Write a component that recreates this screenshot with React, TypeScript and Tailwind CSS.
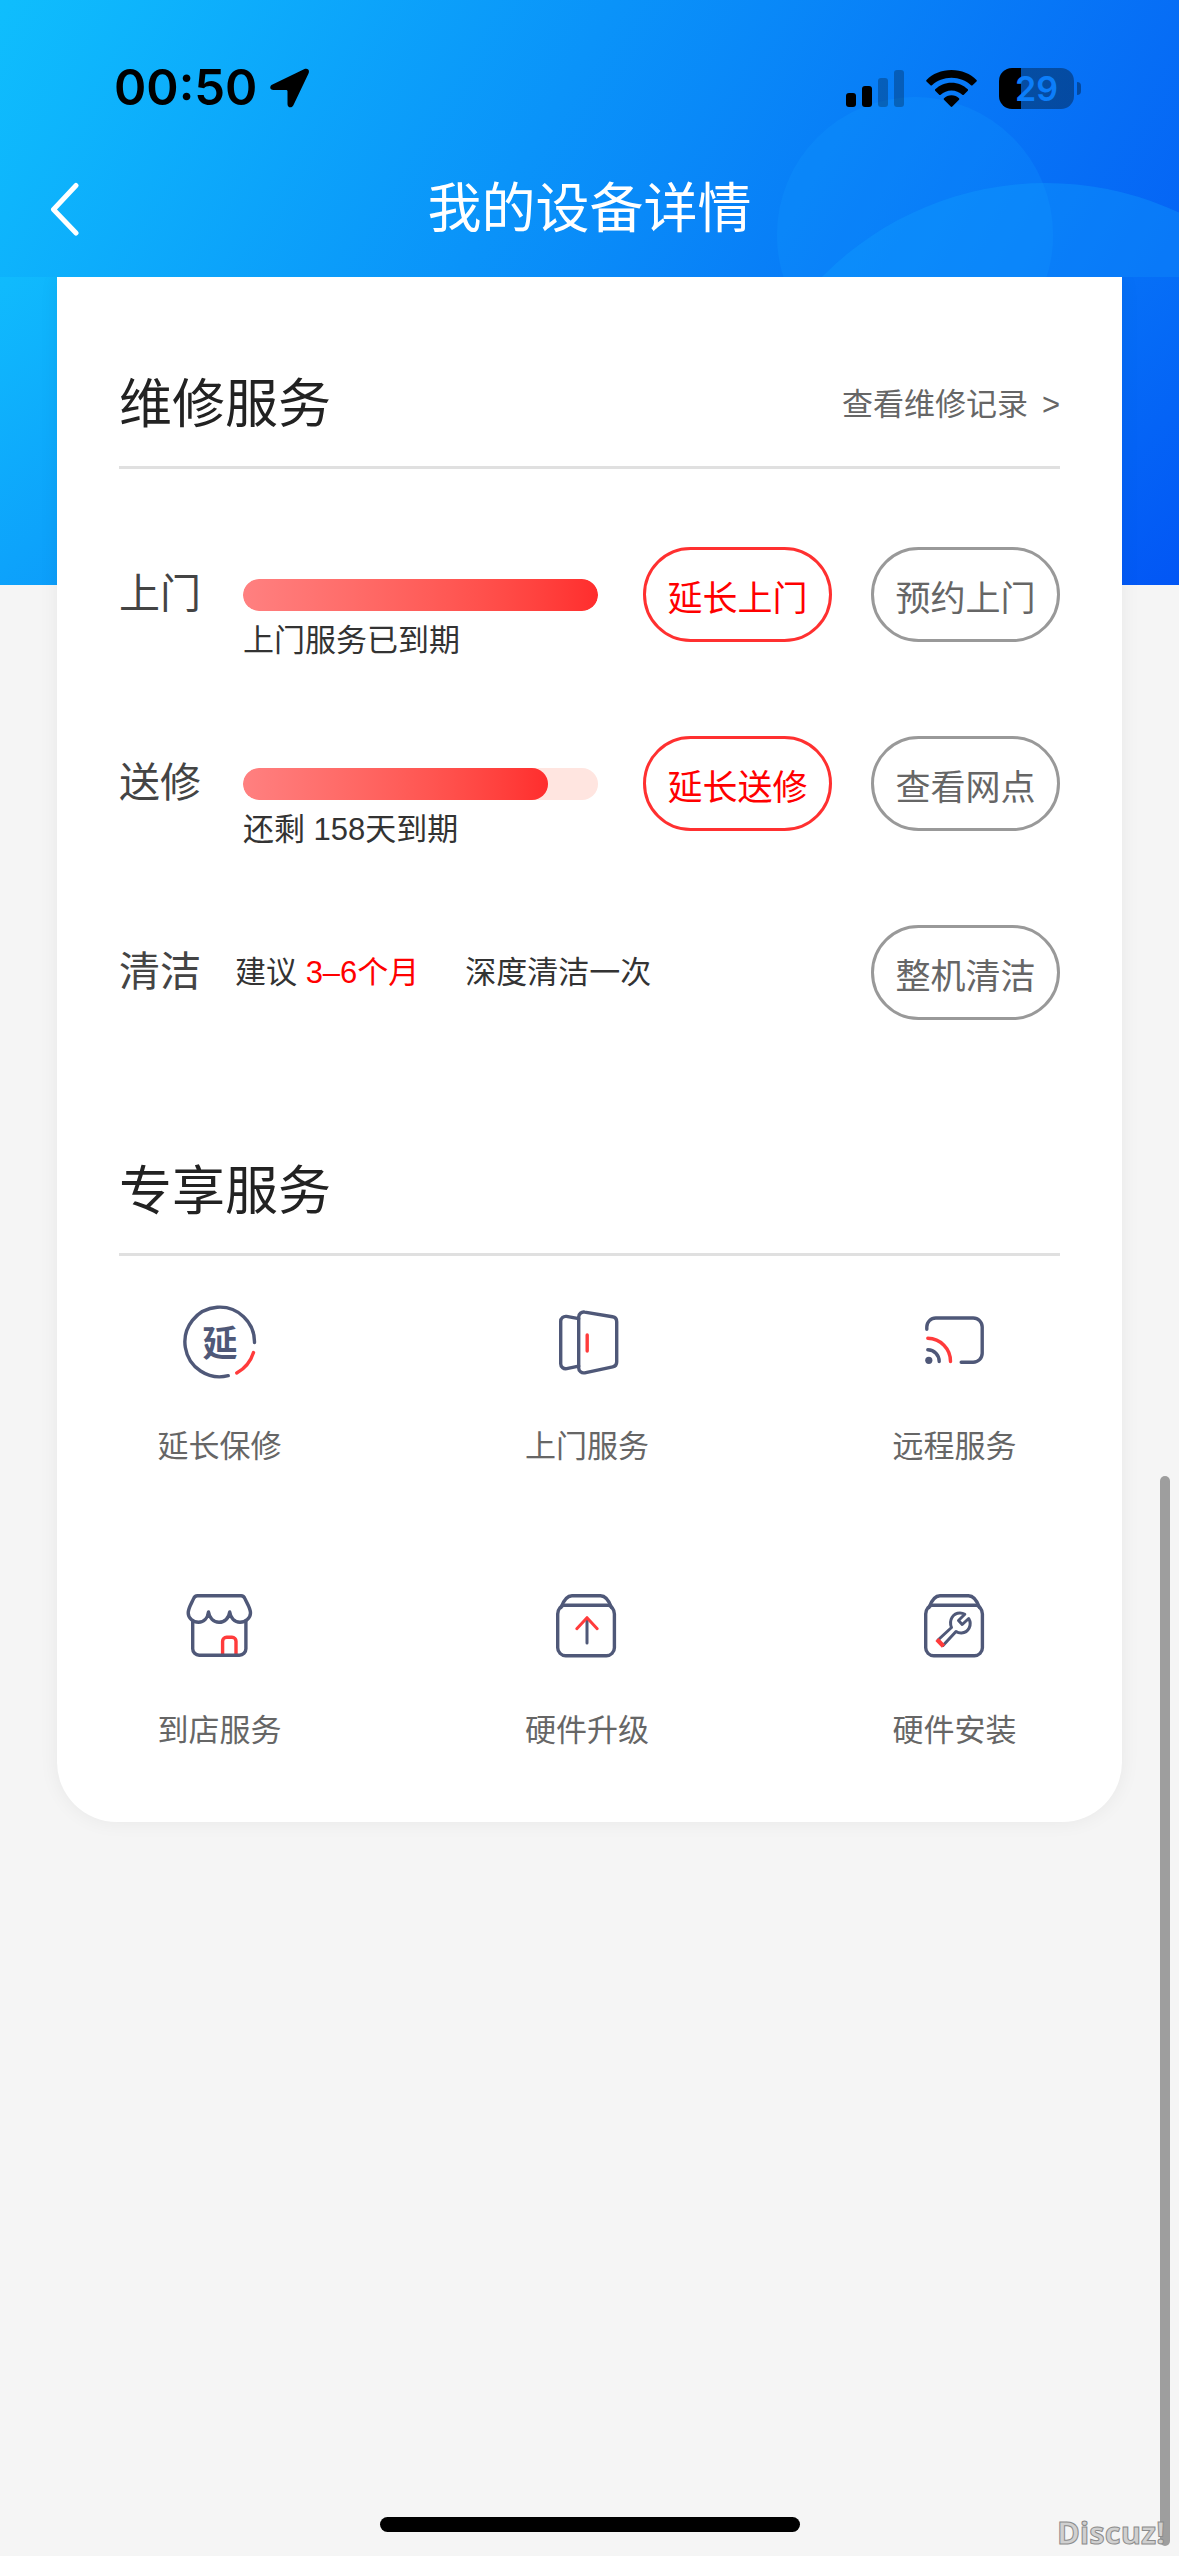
import React from 'react';

interface RepairItem {
  label: string;
  percent: number;
  caption: string;
  extend: string;
  action: string;
}

interface ExclusiveService {
  label: string;
  icon: React.ReactNode;
}

const INK = '#4f5878';
const RED = '#ff3b3b';

const repairItems: RepairItem[] = [
  { label: '上门', percent: 100, caption: '上门服务已到期', extend: '延长上门', action: '预约上门' },
  { label: '送修', percent: 86, caption: '还剩 158天到期', extend: '延长送修', action: '查看网点' }
];

const ServiceIcon: React.FC<{ children: React.ReactNode }> = ({ children }) => (
  <svg
    viewBox="1 0 94 94"
    className="w-[94px] h-[94px]"
    fill="none"
    stroke={INK}
    strokeWidth="3.4"
    strokeLinecap="round"
    strokeLinejoin="round"
    aria-hidden="true"
  >
    {children}
  </svg>
);

const BoxOutline = () => (
  <>
    <path d="M22 28.5C24 23 27.5 16.7 33 16.7H61.500C67 16.700 70.500 23 72.500 28.500" />
    <path d="M25 26.200H69.400C71.500 26.200 75.400 30 75.400 35V68.700A8 8 0 0 1 67.400 76.700H26.700A8 8 0 0 1 18.700 68.700V35C18.700 30 22.500 26.200 25 26.200Z" />
  </>
);

const services: ExclusiveService[] = [
  {
    label: '延长保修',
    icon: (
      <ServiceIcon>
        <path d="M82.500 47.500A34.800 34.800 0 1 0 56.200 80.700" />
        <path d="M81.500 57.500A35.500 35.500 0 0 1 64.700 78" stroke={RED} />
        <text
          x="48"
          y="61"
          textAnchor="middle"
          fill={INK}
          stroke="none"
          className="font-['Noto_Sans_CJK_SC',sans-serif] text-[35px] font-bold"
        >
          延
        </text>
      </ServiceIcon>
    )
  },
  {
    label: '上门服务',
    icon: (
      <ServiceIcon>
        <path d="M39.700 22A5 5 0 0 1 45.700 17.100L73.500 21.800A5 5 0 0 1 77.700 26.700V67A5 5 0 0 1 73.700 71.900L45.700 77.800A5 5 0 0 1 39.700 72.900Z" />
        <path d="M39.700 23.600L27.500 21.400A5 5 0 0 0 21.700 26.300V68.800A5 5 0 0 0 27.700 73.700L39.700 71.200" />
        <path d="M48.200 40V56" stroke={RED} />
      </ServiceIcon>
    )
  },
  {
    label: '远程服务',
    icon: (
      <ServiceIcon>
        <path d="M19.800 34.300V32A9 9 0 0 1 28.800 23H66.200A9 9 0 0 1 75.200 32V58.300A9 9 0 0 1 66.200 67.300H54.200" />
        <path d="M20.800 43.300A23 23 0 0 1 43.500 66.500" stroke={RED} />
        <path d="M20.800 54.700A11.700 11.700 0 0 1 32.200 66.500" />
        <circle cx="21.800" cy="65.300" r="3.600" fill={INK} stroke="none" />
      </ServiceIcon>
    )
  },
  {
    label: '到店服务',
    icon: (
      <ServiceIcon>
        <path d="M50.600 75V62.300A4 4 0 0 1 54.600 58.300H60A4 4 0 0 1 64 62.300V75" stroke={RED} />
        <path d="M20.700 42V69.700A6.500 6.500 0 0 0 27.200 76.200H67.400A6.500 6.500 0 0 0 73.900 69.700V42" />
        <path d="M25.500 16.700H69A4 4 0 0 1 72.800 19.400C75 24.500 78.500 29 78.500 34C78.500 39 73.500 43.300 68 43.300C62.500 43.300 58.500 39 57.700 33C57 39 52.500 43.300 47 43.300C41.500 43.300 37.300 39 36.500 33C35.700 39 32 43.300 26.500 43.300C21 43.300 16.200 39 16.200 34C16.200 29 19.500 24.500 21.700 19.400A4 4 0 0 1 25.500 16.700Z" />
      </ServiceIcon>
    )
  },
  {
    label: '硬件升级',
    icon: (
      <ServiceIcon>
        <BoxOutline />
        <path d="M48 41V64" strokeWidth="3" />
        <path d="M37.800 49.700L48 38.700L58.200 49.700" stroke={RED} strokeWidth="3" />
      </ServiceIcon>
    )
  },
  {
    label: '硬件安装',
    icon: (
      <ServiceIcon>
        <BoxOutline />
        <path
          d="M31 61L44.500 48.500C41.500 41 46 34 53 34C55 34 56.500 34.500 57.800 35.300L51.500 41.500L55.200 45.500L61.700 39.500C65.500 46 61.500 53.500 54.500 54C52.500 54.100 50.500 53.500 49 52.500L36 66.500"
          strokeWidth="3"
        />
        <path d="M30 60.500L36.500 67.300" stroke={RED} strokeWidth="4.400" strokeLinecap="butt" />
      </ServiceIcon>
    )
  }
];

const StatusBar = () => (
  <div className="flex h-[176px] items-center justify-between pl-[114px] pr-[98px]">
    <div className="flex items-center gap-[13px]">
      <span className="font-['Inter',sans-serif] text-[49px] leading-[60px] font-semibold text-black">00:50</span>
      <svg viewBox="0 0 39 40" className="w-[39px] h-10" aria-hidden="true">
        <path d="M2.500 16.500L34 1.300C37.500-.3 40 2 38.500 5.500L23.500 37C22 40.500 17.500 40 17.500 36V23.500C17.500 22.500 17 22 16 22H3.500C-.5 22-.8 18 2.500 16.500Z" />
      </svg>
    </div>

    <div className="flex items-center gap-[22px]">
      <svg viewBox="0 0 58 38" className="w-[58px] h-[38px]" aria-hidden="true">
        <rect x="0" y="24" width="10" height="14" rx="3" />
        <rect x="16" y="17" width="10" height="21" rx="3" />
        <rect x="32" y="9" width="10" height="29" rx="3" opacity=".25" />
        <rect x="48" y="1" width="10" height="37" rx="3" opacity=".25" />
      </svg>
      <svg viewBox="0 0 51 38" className="w-[51px] h-[38px]" aria-hidden="true">
        <path d="M25.500 1C35.500 1 44.500 4.800 50.500 11C51 11.500 51 12 50.500 12.500L46.500 16.300C46 16.700 45.500 16.700 45 16.200C40 11.500 33 8.700 25.500 8.700S11 11.500 6 16.200C5.500 16.700 5 16.700 4.500 16.300L.5 12.500C0 12 0 11.500 .5 11C6.500 4.800 15.500 1 25.500 1Z" />
        <path d="M25.500 13.700C32 13.700 37.500 16.200 41.800 20.300C42.300 20.800 42.300 21.300 41.800 21.800L37.800 25.700C37.300 26.200 36.800 26.100 36.300 25.700C33.400 23 29.700 21.400 25.500 21.400S17.600 23 14.700 25.700C14.200 26.100 13.700 26.200 13.200 25.700L9.200 21.800C8.700 21.300 8.700 20.800 9.200 20.300C13.500 16.200 19 13.700 25.500 13.700Z" />
        <path d="M25.500 26.300C28.500 26.300 31 27.400 33 29.200C33.500 29.700 33.500 30.200 33 30.700L26.300 37.500C25.800 38 25.200 38 24.700 37.500L18 30.700C17.500 30.200 17.500 29.700 18 29.200C20 27.400 22.500 26.300 25.500 26.300Z" />
      </svg>
      <div className="flex items-center gap-[3px]">
        <div className="flex h-[41px] w-[75px] items-center justify-center rounded-[13px] bg-[linear-gradient(90deg,#000_22px,rgba(0,0,0,0.34)_22px)] font-['Inter',sans-serif] text-[34px] leading-[41px] font-semibold text-[#0c7efa]">
          29
        </div>
        <div className="h-[13px] w-1 rounded-r-full bg-black/35" />
      </div>
    </div>
  </div>
);

const Header = () => (
  <header className="relative h-[277px] overflow-hidden bg-[linear-gradient(120deg,#0fbefd_0%,#0a93f9_46%,#0563f5_100%)]">
    {/* Decorative bubbles */}
    <div className="absolute top-[97px] right-[126px] size-[276px] rounded-full bg-[#12a0ff]/20" />
    <div className="absolute top-[183px] -right-[181px] size-[628px] rounded-full bg-[#12a0ff]/35" />

    <div className="relative">
      <StatusBar />
      <div className="grid grid-cols-[1fr_auto_1fr] items-center px-12">
        <button type="button" aria-label="返回" className="justify-self-start">
          <svg viewBox="0 0 33 54" className="w-[33px] h-[54px]" fill="none" stroke="#fff" strokeWidth="5" strokeLinecap="round" strokeLinejoin="round">
            <path d="M28 3.500L5.500 27.500L28 51" />
          </svg>
        </button>
        <h1 className="text-[54px] leading-[66px] font-normal text-white">我的设备详情</h1>
      </div>
    </div>
  </header>
);

const PillButton: React.FC<{ label: string; danger?: boolean }> = ({ label, danger }) => (
  <button
    type="button"
    className={`h-[95px] w-[189px] shrink-0 rounded-full border-3 pt-2 text-[35px] leading-10 ${
      danger ? 'border-[#ff3030] text-[#ff0000]' : 'border-[#999999] text-[#666666]'
    }`}
  >
    {label}
  </button>
);

const App: React.FC = () => {
  return (
    <div
      lang="zh-CN"
      className="relative flex min-h-screen flex-col bg-[#f5f5f5] font-['Liberation_Sans','Noto_Sans_CJK_SC',sans-serif]"
    >
      <Header />

      <main className="bg-[linear-gradient(140deg,#10bbfd_0%,#0a8bf9_45%,#0256f5_100%)] bg-[length:100%_308px] bg-no-repeat px-[57px]">
        <div className="rounded-b-[60px] bg-white px-[62px] pb-[71px] shadow-[0_0_20px_rgba(0,0,0,0.06)]">
          {/* Repair services */}
          <section>
            <div className="flex items-center justify-between border-b-3 border-[#e0e0e0] pt-24 pb-[29px]">
              <h2 className="text-[53px] leading-[64px] font-normal text-[#222222]">维修服务</h2>
              <a href="#records" className="flex gap-[14px] text-[31px] leading-10 text-[#666666]">
                <span>查看维修记录</span>
                <span>&gt;</span>
              </a>
            </div>

            <div className="mt-[78px] flex flex-col gap-[77px]">
              {repairItems.map((item) => (
                <div key={item.label} className="flex h-28 items-start">
                  <span className="mr-[42px] text-[41px] leading-[95px] text-[#444444]">{item.label}</span>
                  <div className="flex-1 pt-8">
                    <div className="h-8 overflow-hidden rounded-full bg-[#ffe5e0]">
                      <div
                        className="h-full rounded-full bg-linear-to-r from-[#ff8080] to-[#ff2d2d]"
                        style={{ width: `${item.percent}%` }}
                      />
                    </div>
                    <p className="mt-2 text-[31px] leading-11 text-[#333333]">{item.caption}</p>
                  </div>
                  <div className="ml-[45px] flex gap-[39px]">
                    <PillButton label={item.extend} danger />
                    <PillButton label={item.action} />
                  </div>
                </div>
              ))}

              <div className="flex h-28 items-start">
                <span className="mr-[34px] text-[41px] leading-[95px] text-[#444444]">清洁</span>
                <p className="flex-1 text-[31px] leading-[95px] text-[#333333]">
                  建议 <span className="mr-[46px] text-[#ff0000]">3–6个月</span>深度清洁一次
                </p>
                <PillButton label="整机清洁" />
              </div>
            </div>
          </section>

          {/* Exclusive services */}
          <section className="mt-[27px]">
            <div className="border-b-3 border-[#e0e0e0] pt-24 pb-[29px]">
              <h2 className="text-[53px] leading-[64px] font-normal text-[#222222]">专享服务</h2>
            </div>

            <div className="mt-[39px] grid grid-cols-[repeat(3,201px)] justify-between gap-y-28 pr-[5px]">
              {services.map((service) => (
                <button key={service.label} type="button" className="flex flex-col items-center gap-[38px]">
                  {service.icon}
                  <span className="text-[31px] leading-10 text-[#666666]">{service.label}</span>
                </button>
              ))}
            </div>
          </section>
        </div>
      </main>

      {/* Scroll position, home indicator and watermark */}
      <div className="absolute top-[1476px] right-[9px] bottom-[10px] w-[10px] rounded-full bg-[#9e9e9e]" />
      <div className="mt-auto mb-6 h-[15px] w-[420px] self-center rounded-full bg-black" />
      <span className="absolute right-[14px] bottom-1 font-['Open_Sans',sans-serif] text-[31px] leading-10 font-bold text-[#d0d0d0] [-webkit-text-stroke:1px_#8c8c8c]">
        Discuz!
      </span>
    </div>
  );
};

export default App;
